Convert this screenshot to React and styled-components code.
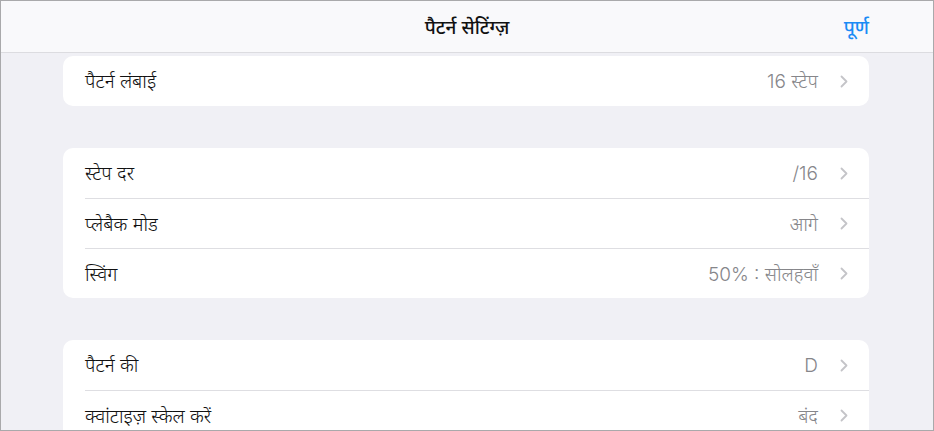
import React from 'react'
import styled, { createGlobalStyle } from 'styled-components'

const Global = createGlobalStyle`
  html, body { margin: 0; padding: 0; }
  body {
    font-family: Inter, "Noto Sans", "Noto Sans Devanagari", sans-serif;
    -webkit-font-smoothing: antialiased;
  }
`

const Frame = styled.div`
  box-sizing: border-box;
  width: 934px;
  height: 431px;
  border: 1px solid #a9a9ab;
  background: #f0f0f5;
  overflow: hidden;
  display: flex;
  flex-direction: column;
`

const Header = styled.header`
  flex: none;
  height: 51px;
  background: #f9f9fb;
  border-bottom: 1px solid #dcdce0;
  display: grid;
  grid-template-columns: 1fr auto 1fr;
  align-items: center;
  padding: 0 64px;
`

const Title = styled.h1`
  grid-column: 2;
  margin: 0;
  font-size: 19px;
  font-weight: 500;
  color: #111;
`

const Done = styled.button`
  grid-column: 3;
  justify-self: end;
  border: 0;
  background: none;
  padding: 0;
  font: inherit;
  font-size: 19px;
  font-weight: 500;
  color: #1a8cf5;
`

const Content = styled.main`
  flex: 1;
  padding: 3px 64px 0 62px;
  display: flex;
  flex-direction: column;
  gap: 42px;
`

const Group = styled.section`
  background: #fff;
  border-radius: 10px;
  overflow: hidden;
`

const Row = styled.div`
  height: 50px;
  display: flex;
  align-items: center;
  margin-left: 22px;
  padding-right: 21px;
  box-sizing: border-box;
  border-top: ${p => (p.$first ? 'none' : '1px solid #dedee2')};
`

const Label = styled.span`
  flex: 1;
  font-size: 19px;
  font-weight: 300;
  color: #111;
`

const Value = styled.span`
  font-size: 19px;
  font-weight: 300;
  color: #86868a;
  margin-right: 22px;
`

const Chevron = () => (
  <svg width="8" height="13" viewBox="0 0 8 13">
    <path d="M1.5 1.5 L6.5 6.5 L1.5 11.5" fill="none" stroke="#c4c4c8" strokeWidth="1.8" strokeLinecap="round" strokeLinejoin="round" />
  </svg>
)

const groups = [
  [['पैटर्न लंबाई', '16 स्टेप']],
  [
    ['स्टेप दर', '/16'],
    ['प्लेबैक मोड', 'आगे'],
    ['स्विंग', '50% : सोलहवाँ'],
  ],
  [
    ['पैटर्न की', 'D'],
    ['क्वांटाइज़ स्केल करें', 'बंद'],
  ],
]

export default function App() {
  return (
    <Frame>
      <Global />
      <Header>
        <Title>पैटर्न सेटिंग्ज़</Title>
        <Done>पूर्ण</Done>
      </Header>
      <Content>
        {groups.map((rows, gi) => (
          <Group key={gi}>
            {rows.map(([label, value], i) => (
              <Row key={label} $first={i === 0}>
                <Label>{label}</Label>
                <Value>{value}</Value>
                <Chevron />
              </Row>
            ))}
          </Group>
        ))}
      </Content>
    </Frame>
  )
}
